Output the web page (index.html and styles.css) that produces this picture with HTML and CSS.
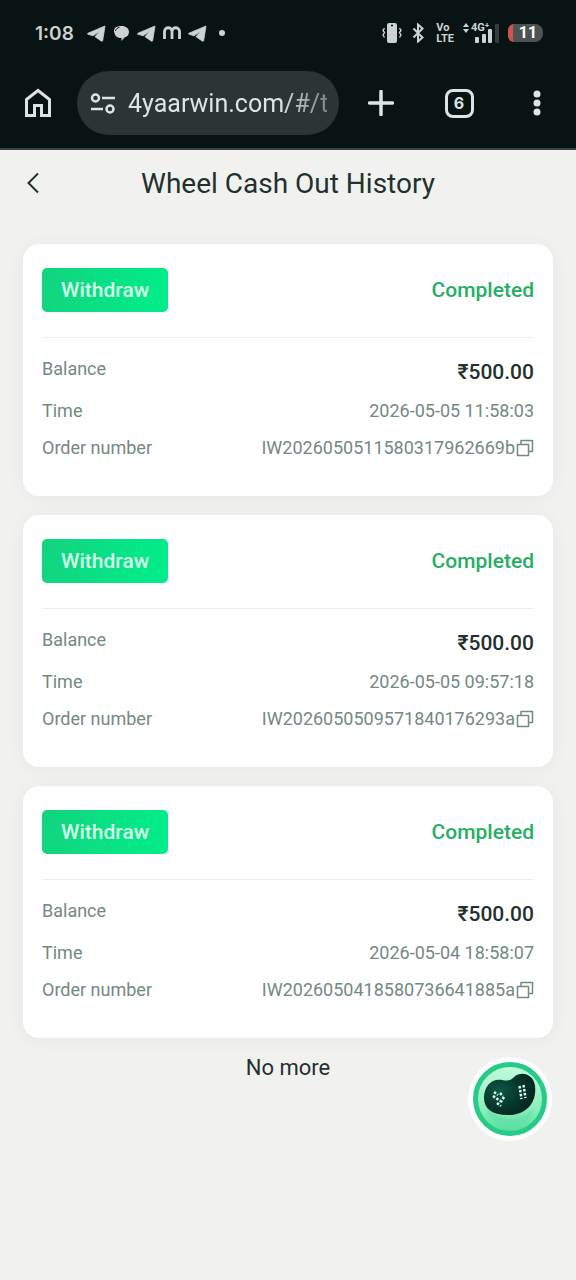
FILE: index.html
```html
<!DOCTYPE html>
<html lang="en">
<head>
<meta charset="utf-8">
<meta name="viewport" content="width=device-width, initial-scale=1">
<title>Wheel Cash Out History</title>
<link rel="stylesheet" href="styles.css">
</head>
<body>
<svg class="defs" width="0" height="0" aria-hidden="true">
  <symbol id="plane" viewBox="0 0 19 17"><path d="M18 1 1 8.200c-.7.4-.6.9.1 1.100L6 10.800 13 6 8 11.700 14.500 16.200c.6.3 1 .1 1.200-.6z" fill="currentColor" stroke="currentColor" stroke-width=".8"/></symbol>
  <symbol id="copy" viewBox="0 0 18 18"><path d="M1.500 5.500h11v11h-11zM5 5.500V1.500h11.500v11h-4" fill="none" stroke="currentColor" stroke-width="1.500" stroke-linejoin="round"/></symbol>
</svg>
<header class="chrome">
  <div class="status">
    <div class="status-left">
      <span class="clock">1:08</span>
      <svg width="19" height="17"><use href="#plane"/></svg>
      <svg width="17" height="17" viewBox="0 0 17 17"><path d="M8.500 1c4.500 0 7.500 2.500 7.500 6 0 3-2 5-4.500 5.500L8.500 16v-3C4.500 13 2 11 1.500 8 .5 6 1 4 2 3c1.500-1.500 4-2 6.500-2z" fill="currentColor"/><path d="M2.500 6c.5-2 2-3.200 4-3.700" fill="none" stroke="#08100f"/></svg>
      <svg width="19" height="17"><use href="#plane"/></svg>
      <svg width="18" height="14" viewBox="0 0 18 14"><path d="M1.500 13V5.500c0-5 7.500-5 7.500 0V13M9 5.500c0-5 7.500-5 7.500 0V13" fill="none" stroke="currentColor" stroke-width="2.800"/></svg>
      <svg width="19" height="17"><use href="#plane"/></svg>
      <span class="dot"></span>
    </div>
    <div class="status-right">
      <svg width="20" height="20" viewBox="0 0 20 20"><rect x="5" y="0" width="10" height="20" rx="2" fill="currentColor"/><circle cx="10" cy="2.500" r="1" fill="#08100f"/><path d="M2.500 5 1 7.500l1.500 2L1 12l1.500 2.500M17.500 5 19 7.500l-1.500 2L19 12l-1.500 2.500" fill="none" stroke="currentColor" stroke-width="1.400"/></svg>
      <svg class="bluetooth" width="13" height="20" viewBox="0 0 13 20"><path d="m1.500 5.500 9 9-4.500 4V1.500l4.500 4-9 9" fill="none" stroke="currentColor" stroke-width="2"/></svg>
      <span class="volte"><span>Vo</span><span>LTE</span></span>
      <svg class="signal" width="36" height="22" viewBox="0 0 36 22"><path d="m0 5 3-4 3 4zM0 7l3 4 3-4z" fill="currentColor"/><text class="network" x="8" y="9">4G⁺</text><rect x="12" y="15" width="4" height="6" rx="1" fill="currentColor"/><rect x="19" y="12" width="4" height="9" rx="1" fill="currentColor"/><rect x="25" y="7" width="4" height="14" rx="1" fill="currentColor"/><rect x="32" y="2" width="4" height="19" rx="1" fill="#353c3b"/></svg>
      <span class="battery">11</span>
    </div>
  </div>
  <nav class="toolbar" aria-label="Browser">
    <button class="tool home" aria-label="Home"><svg width="28" height="30" viewBox="0 0 28 30"><path d="M2.500 11.500 14 2.500l11.500 9v16h-8v-10h-7v10h-8z" fill="none" stroke="currentColor" stroke-width="3"/></svg></button>
    <label class="address">
      <svg width="26" height="21" viewBox="0 0 26 21" fill="none" stroke="currentColor" stroke-width="2.500"><circle cx="5.500" cy="5" r="3.500"/><path d="M12 5h13M1 16h12"/><circle cx="20" cy="16" r="3.500"/></svg>
      <input class="url" aria-label="Address" value="4yaarwin.com/#/t" readonly>
    </label>
    <button class="tool" aria-label="New tab"><svg width="26" height="26" viewBox="0 0 26 26"><path d="M13 1.500v23M1.500 13h23" stroke="currentColor" stroke-width="3.500" stroke-linecap="round"/></svg></button>
    <button class="tool" aria-label="Tabs"><span class="tabs">6</span></button>
    <button class="tool" aria-label="Menu"><svg width="8" height="26" viewBox="0 0 8 26" fill="currentColor"><circle cx="4" cy="4" r="3.500"/><circle cx="4" cy="13" r="3.500"/><circle cx="4" cy="22" r="3.500"/></svg></button>
  </nav>
</header>
<div class="titlebar">
  <button class="back" aria-label="Back"><svg width="14" height="22" viewBox="0 0 14 22"><path d="m12 1.500-9.500 9.500 9.500 9.500" fill="none" stroke="currentColor" stroke-width="2"/></svg></button>
  <h1 class="title">Wheel Cash Out History</h1>
</div>
<main class="list">
  <article class="card">
    <div class="card-head"><button class="withdraw">Withdraw</button><span class="state">Completed</span></div>
    <dl class="rows">
      <div class="row balance"><dt>Balance</dt><dd class="amount">₹500.00</dd></div>
      <div class="row"><dt>Time</dt><dd>2026-05-05 11:58:03</dd></div>
      <div class="row"><dt>Order number</dt><dd class="order">IW2026050511580317962669b<button class="copy" aria-label="Copy order number"><svg width="18" height="18"><use href="#copy"/></svg></button></dd></div>
    </dl>
  </article>
  <article class="card">
    <div class="card-head"><button class="withdraw">Withdraw</button><span class="state">Completed</span></div>
    <dl class="rows">
      <div class="row balance"><dt>Balance</dt><dd class="amount">₹500.00</dd></div>
      <div class="row"><dt>Time</dt><dd>2026-05-05 09:57:18</dd></div>
      <div class="row"><dt>Order number</dt><dd class="order">IW2026050509571840176293a<button class="copy" aria-label="Copy order number"><svg width="18" height="18"><use href="#copy"/></svg></button></dd></div>
    </dl>
  </article>
  <article class="card">
    <div class="card-head"><button class="withdraw">Withdraw</button><span class="state">Completed</span></div>
    <dl class="rows">
      <div class="row balance"><dt>Balance</dt><dd class="amount">₹500.00</dd></div>
      <div class="row"><dt>Time</dt><dd>2026-05-04 18:58:07</dd></div>
      <div class="row"><dt>Order number</dt><dd class="order">IW2026050418580736641885a<button class="copy" aria-label="Copy order number"><svg width="18" height="18"><use href="#copy"/></svg></button></dd></div>
    </dl>
  </article>
</main>
<p class="end">No more</p>
<button class="support" aria-label="Support">
  <svg width="86" height="86" viewBox="0 0 86 86">
    <defs>
      <linearGradient id="disc" x1="0" y1="0" x2="0" y2="1"><stop offset="0" stop-color="#c4fbdc"/><stop offset=".65" stop-color="#8beebb"/><stop offset="1" stop-color="#4fdc9a"/></linearGradient>
      <radialGradient id="face" cx=".3" cy=".4" r=".7"><stop offset="0" stop-color="#0c5745"/><stop offset=".6" stop-color="#06362b"/><stop offset="1" stop-color="#04271f"/></radialGradient>
    </defs>
    <circle cx="43" cy="43" r="42" fill="#fff"/>
    <circle cx="43" cy="43" r="34.500" fill="url(#disc)" stroke="#27cb88" stroke-width="5"/>
    <path d="M20 52c12 15 34 14 47 0 0 8-10 18-24 18S20 61 20 52z" fill="#5fe0a5" opacity=".5"/>
    <path d="M17 42c0-12 8-20 18-18 6 1 8 1 12-3 8-7 20-2 21 9 2 16-8 28-24 29-18 1-27-6-27-17z" fill="url(#face)"/>
    <g fill="none" stroke="#d8fff0" stroke-width="2.500" stroke-dasharray="2.500 1.500"><path d="m27 36 4 3M26 40l9 6M33 37l3 3M30 47l4 3M37 41l-3 5"/><path d="m52.500 30 2 13M56.500 29l2 13"/></g>
  </svg>
</button>
</body>
</html>
```
FILE: styles.css
```css
* { box-sizing: border-box; }
body { margin: 0; min-height: 100vh; background: #f1f2f0; color: #22312e; font-family: Roboto, "Noto Sans", sans-serif; }
button { padding: 0; border: 0; background: none; color: inherit; font: inherit; }
svg { display: block; flex: none; }
.defs { position: absolute; }
.chrome { background: #081413; border-bottom: 2px solid #3a4442; color: #dbe5e3; }
.status { display: flex; justify-content: space-between; align-items: center; height: 66px; padding: 0 33px 0 35px; color: #cdd3d2; }
.status-left { display: flex; align-items: center; gap: 7px; }
.clock { margin-right: 6px; font-family: Inter, sans-serif; font-size: 19px; font-weight: 600; }
.dot { width: 6px; height: 6px; margin-left: 5px; border-radius: 50%; background: currentColor; }
.status-right { display: flex; align-items: center; gap: 9px; }
.bluetooth { margin: 0 2px 0 1px; }
.volte { display: flex; flex-direction: column; font-size: 11px; font-weight: 700; line-height: 11px; }
.volte span { height: 11px; }
.network { fill: currentColor; font-size: 11px; font-weight: 700; }
.signal { overflow: visible; }
.battery { width: 35px; border-left: 5px solid #d15350; border-radius: 6px 8px 8px 6px; background: #4b5353; color: #fff; font-size: 16px; font-weight: 700; line-height: 18px; text-align: center; }
.toolbar { display: flex; align-items: center; height: 82px; padding: 0 0 8px 14px; }
.tool { display: grid; place-items: center; flex: 1; height: 48px; }
.home { flex: none; width: 48px; margin-right: 15px; }
.address { display: flex; align-items: center; gap: 12px; width: 262px; height: 64px; margin-right: 3px; padding: 0 12px 0 13px; border-radius: 32px; background: #293634; }
.url { flex: 1; min-width: 0; padding: 0; border: 0; outline: 0; color: #dbe5e3; background: none; font: 25px Roboto, sans-serif; -webkit-mask-image: linear-gradient(90deg, #000 76%, transparent 120%); mask-image: linear-gradient(90deg, #000 76%, transparent 120%); }
.tabs { display: grid; place-items: center; width: 29px; height: 29px; border: 3px solid currentColor; border-radius: 8px; font-family: Inter, sans-serif; font-size: 16px; font-weight: 700; }
.titlebar { display: grid; grid-template-columns: 48px 1fr 48px; align-items: center; height: 66px; }
.back { display: grid; place-items: center; height: 48px; padding-left: 18px; }
.title { margin: 0; font-size: 28px; font-weight: 400; text-align: center; }
.list { display: grid; gap: 19px; padding: 28px 23px 0; }
.card { padding: 24px 19px 30px; border-radius: 16px; background: #fff; box-shadow: 0 2px 16px rgba(80, 80, 70, .06); }
.card-head { display: flex; justify-content: space-between; align-items: center; padding-bottom: 25px; border-bottom: 1px solid #eeefee; font-size: 21px; font-weight: 500; line-height: 44px; }
.withdraw { padding: 0 19px; border-radius: 5px; background: linear-gradient(100deg, #13d37f, #00ee89); color: #d3ffeb; }
.state { color: #27ae65; }
.rows { margin: 0; padding-top: 13px; color: #728a82; font-size: 18px; }
.row { display: flex; justify-content: space-between; align-items: center; height: 37px; }
.row dd { margin: 0; }
.balance { height: 41px; align-items: flex-start; line-height: 36px; }
.balance .amount { color: #22312e; font-size: 21px; font-weight: 500; line-height: 42px; }
.order { display: flex; align-items: center; gap: 1px; }
.end { margin: 16px 0 0; font-size: 22px; line-height: 28px; text-align: center; }
.support { position: fixed; right: 23px; bottom: 138px; border-radius: 50%; }
```
